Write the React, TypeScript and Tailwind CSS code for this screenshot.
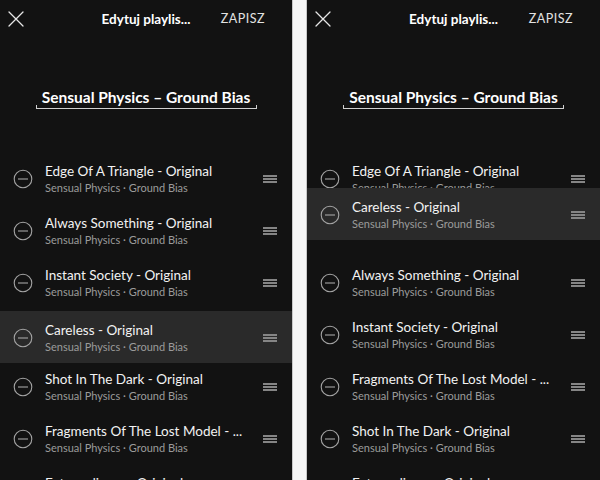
type Track = { title: string; dragged?: boolean; placeholder?: boolean };

const font = { fontFamily: 'Lato, "Liberation Sans", sans-serif' };

const leftTracks: Track[] = [
  { title: 'Edge Of A Triangle - Original' },
  { title: 'Always Something - Original' },
  { title: 'Instant Society - Original' },
  { title: 'Careless - Original', dragged: true },
  { title: 'Shot In The Dark - Original' },
  { title: 'Fragments Of The Lost Model - ...' },
  { title: 'Extraordinary - Original' },
];

const rightTracks: Track[] = [
  { title: 'Edge Of A Triangle - Original' },
  { title: '', placeholder: true },
  { title: 'Always Something - Original' },
  { title: 'Instant Society - Original' },
  { title: 'Fragments Of The Lost Model - ...' },
  { title: 'Shot In The Dark - Original' },
  { title: 'Extraordinary - Original' },
];

function CloseIcon() {
  return (
    <svg width="16" height="16" viewBox="0 0 16 16">
      <path d="M1 1L15 15M15 1L1 15" stroke="#e6e6e6" strokeWidth="1.3" strokeLinecap="round" />
    </svg>
  );
}

function MinusCircle() {
  return (
    <svg width="20" height="20" viewBox="0 0 20 20" className="shrink-0">
      <circle cx="10" cy="10" r="8.8" fill="none" stroke="#a4a4a4" strokeWidth="1.1" />
      <line x1="5" y1="10" x2="15" y2="10" stroke="#a4a4a4" strokeWidth="1.1" />
    </svg>
  );
}

function DragHandle() {
  return (
    <div className="flex flex-col gap-[1.5px] w-[14px]">
      <div className="h-[1.5px] bg-[#858585]" />
      <div className="h-[1.5px] bg-[#858585]" />
      <div className="h-[1.5px] bg-[#858585]" />
    </div>
  );
}

function Row({ title, className = '' }: { title: string; className?: string }) {
  return (
    <div className={`h-[52px] flex items-start ${className}`}>
      <div className="w-[45px] pl-[13px] pt-[17px]">
        <MinusCircle />
      </div>
      <div className="flex-1 pt-[10px] min-w-0">
        <div className="text-[13.5px] leading-[18px] text-[#f2f2f2] whitespace-nowrap">{title}</div>
        <div className="text-[11px] leading-[16px] text-[#9b9b9b] whitespace-nowrap">
          Sensual Physics · Ground Bias
        </div>
      </div>
      <div className="pt-[23px] pr-[15px]">
        <DragHandle />
      </div>
    </div>
  );
}

function Phone({ tracks, overlay }: { tracks: Track[]; overlay?: string }) {
  return (
    <div className="h-full bg-[#121212] overflow-hidden" style={font}>
      <div className="grid grid-cols-[1fr_auto_1fr] items-center h-[38px]">
        <div className="pl-[8px]">
          <CloseIcon />
        </div>
        <div className="text-[13.5px] font-bold text-white">Edytuj playlis...</div>
        <div className="justify-self-end pr-[27px] text-[12.5px] tracking-[0.5px] text-[#e2e2e2]">ZAPISZ</div>
      </div>

      <div className="pt-[49px] flex flex-col items-center">
        <div className="text-[15.5px] leading-[20px] font-bold text-white">Sensual Physics – Ground Bias</div>
        <div className="mt-[-2px] w-[221px] h-[4px] border-x border-b border-[#d0d0d0]" />
      </div>

      <div className="relative mt-[43px]">
        {tracks.map((t, i) =>
          t.placeholder ? (
            <div key={i} className="h-[52px]" />
          ) : t.dragged ? (
            <Row key={i} title={t.title} className="relative top-[3px] bg-[#2a2a2a]" />
          ) : (
            <Row key={i} title={t.title} />
          )
        )}
        {overlay && (
          <div className="absolute left-0 right-0 top-[36px]">
            <Row title={overlay} className="bg-[#2a2a2a]" />
          </div>
        )}
      </div>
    </div>
  );
}

export default function App() {
  return (
    <div className="w-[600px] h-[480px] flex bg-[#f6f6f6] overflow-hidden">
      <div className="w-[293px] h-full border-r border-[#c8c8c8]">
        <Phone tracks={leftTracks} />
      </div>
      <div className="w-[13px]" />
      <div className="flex-1 h-full border-l border-[#c8c8c8]">
        <Phone tracks={rightTracks} overlay="Careless - Original" />
      </div>
    </div>
  );
}
